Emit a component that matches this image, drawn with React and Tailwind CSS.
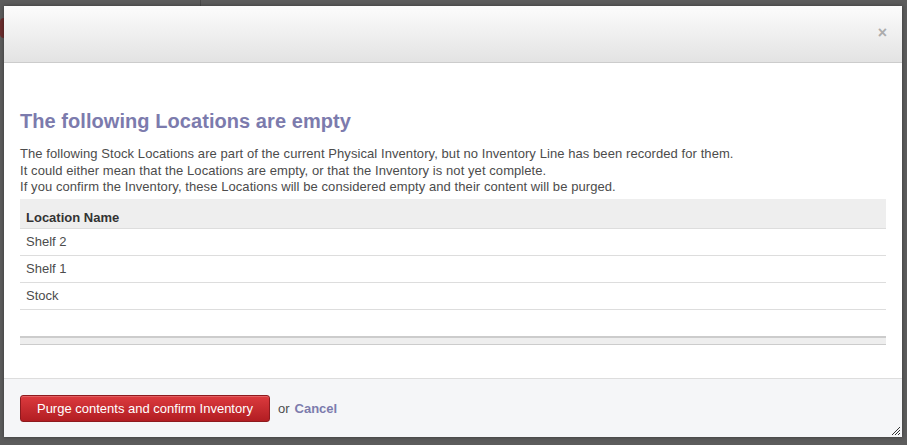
export default function App() {
  const rows = ["Shelf 2", "Shelf 1", "Stock"];
  return (
    <div className="w-[907px] h-[445px] bg-[#5c5c5c] overflow-hidden relative" style={{ fontFamily: '"Liberation Sans", Arial, sans-serif' }}>
      <div className="absolute left-0 top-[18px] w-[8px] h-[20px] rounded-full bg-[#6b2d2d]" />
      <div className="absolute left-[200px] top-0 w-px h-[6px] bg-[#4a4a4a]" />
      <div className="relative ml-[4px] mt-[6px] w-[898px] h-[431px] bg-white flex flex-col shadow-[0_0_4px_rgba(0,0,0,0.4)]">
        <div className="h-[57px] shrink-0 border-b border-[#cccccc] bg-gradient-to-b from-[#fcfcfc] to-[#e3e3e3] flex items-center justify-end pr-[15px]">
          <span className="text-[#acacac] font-bold text-[16px] leading-none mt-[-2px]">×</span>
        </div>
        <div className="flex-1 px-[16px] pt-[47px]">
          <h2 className="text-[20px] leading-[22px] font-bold text-[#7c7bad] tracking-[0.06px]">The following Locations are empty</h2>
          <div className="mt-[14px] text-[13px] leading-[16.5px] text-[#4c4c4c] tracking-[0.075px]">
            <div>The following Stock Locations are part of the current Physical Inventory, but no Inventory Line has been recorded for them.</div>
            <div>It could either mean that the Locations are empty, or that the Inventory is not yet complete.</div>
            <div>If you confirm the Inventory, these Locations will be considered empty and their content will be purged.</div>
          </div>
          <div className="mt-[3px] w-[866px] text-[13px]">
            <div className="h-[30px] bg-[#eeeeee] border-b border-[#dddddd] px-[6px] pt-[10px] leading-[17px] font-bold text-[#333333]">Location Name</div>
            {rows.map((r) => (
              <div key={r} className="h-[27px] border-b border-[#dddddd] px-[6px] flex items-center text-[#4c4c4c]">{r}</div>
            ))}
            <div className="h-[26px]" />
            <div className="h-[9px] bg-[#eeeeee] border-t-2 border-[#cccccc] border-b border-b-[#cccccc]" />
          </div>
        </div>
        <div className="h-[59px] shrink-0 border-t border-[#dddddd] bg-[#f5f6f8] flex items-start pt-[16px] px-[16px] text-[13px]">
          <button className="h-[27px] w-[250px] rounded-[3px] border border-[#8e1a1e] bg-gradient-to-b from-[#dc3a3e] to-[#b21d22] text-white leading-[25px] shadow-[inset_0_1px_0_rgba(255,255,255,0.2)]">Purge contents and confirm Inventory</button>
          <span className="ml-[8px] leading-[27px] text-[#4c4c4c]">or</span>
          <span className="ml-[5px] leading-[27px] font-bold text-[#7c7bad]">Cancel</span>
        </div>
        <svg className="absolute right-[1px] bottom-[1px]" width="12" height="12" viewBox="0 0 12 12">
          <path d="M11 3 L3 11 M11 6 L6 11 M11 9 L9 11" stroke="#333" strokeWidth="1" />
        </svg>
      </div>
    </div>
  );
}
